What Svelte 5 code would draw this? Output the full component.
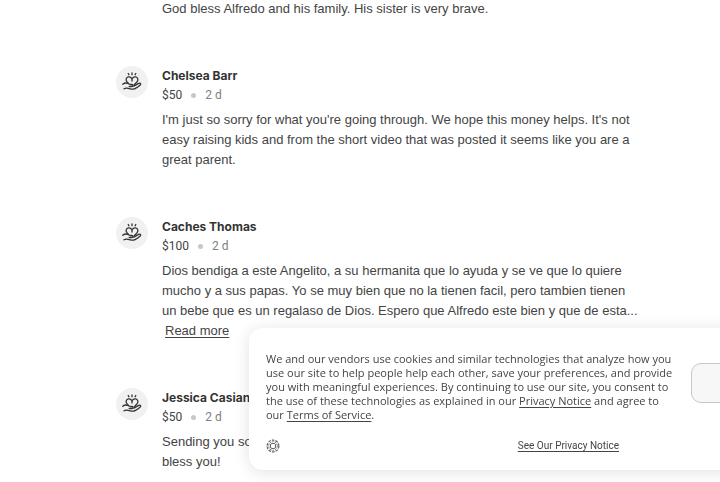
<script>
	const donations = [
		{
			message: ["God bless Alfredo and his family. His sister is very brave."],
		},
		{
			name: "Chelsea Barr",
			amount: "$50",
			time: "2 d",
			message: [
				"I'm just so sorry for what you're going through. We hope this money helps. It's not",
				"easy raising kids and from the short video that was posted it seems like you are a",
				"great parent.",
			],
		},
		{
			name: "Caches Thomas",
			amount: "$100",
			time: "2 d",
			message: [
				"Dios bendiga a este Angelito, a su hermanita que lo ayuda y se ve que lo quiere",
				"mucho y a sus papas. Yo se muy bien que no la tienen facil, pero tambien tienen",
				"un bebe que es un regalaso de Dios. Espero que Alfredo este bien y que de esta...",
			],
			more: true,
		},
		{
			name: "Jessica Casian",
			amount: "$50",
			time: "2 d",
			message: ["Sending you so", "bless you!"],
		},
	];
</script>

<main>
	<ul class="donations">
		{#each donations as donation}
			<li class="donation">
				<span class="avatar" class:empty={!donation.name}>
					{#if donation.name}
						<svg viewBox="0 0 20 20" aria-hidden="true">
							<path d="M6.500 11.500 4.900 9.700C3.500 7.900 4 5.500 6.200 4.900c1.600-.3 3 .5 3.800 1.900.8-1.400 2.200-2.200 3.800-1.900 2.200.6 2.700 3 1.300 4.800L12.300 12.700" />
							<path d="M10 1v1.700M6.200 1.500l.7 1.200M13.800 1.500l-.7 1.200" />
							<path d="M.8 12.300c1.700-1.500 3.500-1.600 5.200-.8l2.200 1h1.700c1.600 0 1.600 2 0 2H7.200" />
							<path d="M11.800 14.100l4.900-2.700c1.600-.8 2.700.5 1.500 1.700-2.200 2-4.300 3.900-6.800 4.100-2.300.2-4.300-.8-6.300-1.100-1.300-.2-2.200.1-3.100.7" />
							<path d="M10 7.500v1.500" />
						</svg>
					{/if}
				</span>
				<div class="body">
					{#if donation.name}
						<div class="name">{donation.name}</div>
						<div class="meta">
							<span>{donation.amount}</span>
							<span class="dot"></span>
							<span class="time">{donation.time}</span>
						</div>
					{/if}
					<p class="message">
						{#each donation.message as line}
							<span class="line">{line}</span>
						{/each}
						{#if donation.more}
							<a class="more" href="#more">Read more</a>
						{/if}
					</p>
				</div>
			</li>
		{/each}
	</ul>
</main>

<section class="cookies" aria-label="Cookie notice">
	<div class="notice">
		<p>
			We and our vendors use cookies and similar technologies that analyze how you<br />
			use our site to help people help each other, save your preferences, and provide<br />
			you with meaningful experiences. By continuing to use our site, you consent to<br />
			the use of these technologies as explained in our <a href="#privacy">Privacy Notice</a> and agree to<br />
			our <a href="#terms">Terms of Service</a>.
		</p>
		<div class="footer">
			<svg class="seal" viewBox="0 0 14 14" aria-hidden="true">
				<circle cx="7" cy="7" r="5.900" stroke-width="1.200" stroke-dasharray="2.700 1" />
				<circle cx="7" cy="7" r="4.300" stroke-dasharray="1.700 1" />
				<rect x="4.500" y="4.500" width="5" height="5" rx="1.500" />
			</svg>
			<a href="#notice">See Our Privacy Notice</a>
		</div>
	</div>
	<button class="choice" aria-label="Manage cookies"></button>
</section>

<style>
	:global(body) {
		background: #fff;
		overflow: hidden;
		font-family: "Open Sans", "Liberation Sans", sans-serif;
		color: #444;
	}
	main {
		padding: 0 16px 0 116px;
	}
	.donations {
		display: flex;
		flex-direction: column;
		gap: 47px;
		list-style: none;
		margin: -1px 0 0;
		padding: 0;
	}
	.donation {
		display: flex;
		gap: 14px;
	}
	.avatar {
		display: flex;
		align-items: center;
		justify-content: center;
		flex: none;
		width: 32px;
		height: 32px;
		border-radius: 50%;
		background: #f1f1f1;
	}
	.avatar.empty {
		height: 0;
	}
	.avatar svg {
		width: 20px;
		height: 20px;
		fill: none;
		stroke: #333;
		stroke-width: 1.3;
		stroke-linecap: round;
		stroke-linejoin: round;
	}
	.name {
		font-family: Inter, "Liberation Sans", sans-serif;
		font-size: 12px;
		font-weight: 700;
		line-height: 20px;
		color: #333;
	}
	.meta {
		display: flex;
		align-items: center;
		gap: 9px;
		margin-bottom: 6px;
		font-size: 12px;
		line-height: 18px;
		font-family: Roboto, "Liberation Sans", sans-serif;
	}
	.dot {
		width: 5px;
		height: 5px;
		border-radius: 50%;
		background: #c8c8c8;
	}
	.time {
		color: #808080;
	}
	.message {
		margin: 0;
		font-family: "Liberation Sans", Arial, sans-serif;
		font-size: 13px;
		line-height: 20px;
	}
	.line {
		display: block;
		white-space: nowrap;
	}
	.more {
		margin-left: 3px;
	}
	a {
		color: inherit;
		text-decoration: underline;
		text-underline-offset: 2px;
	}
	.cookies {
		position: fixed;
		left: 249px;
		right: -200px;
		bottom: 12px;
		display: flex;
		align-items: flex-start;
		gap: 16px;
		padding: 24px 17px 16px;
		border-radius: 14px;
		background: #fff;
		box-shadow: 0 2px 16px rgba(0, 0, 0, 0.12);
	}
	.notice {
		flex: 0 0 409px;
	}
	.notice p {
		margin: 0;
		font-size: 11px;
		line-height: 14px;
		white-space: nowrap;
	}
	.footer {
		display: flex;
		align-items: center;
		justify-content: space-between;
		margin-top: 16px;
		padding-right: 56px;
		font-family: Roboto, "Liberation Sans", sans-serif;
		font-size: 10px;
		line-height: 16px;
	}
	.seal {
		width: 14px;
		height: 14px;
		fill: none;
		stroke: #666;
	}
	.choice {
		flex: 1;
		height: 40px;
		margin-top: 11px;
		border: 1px solid #c8c8c8;
		border-radius: 10px;
		background: #f7f7f7;
	}
</style>
